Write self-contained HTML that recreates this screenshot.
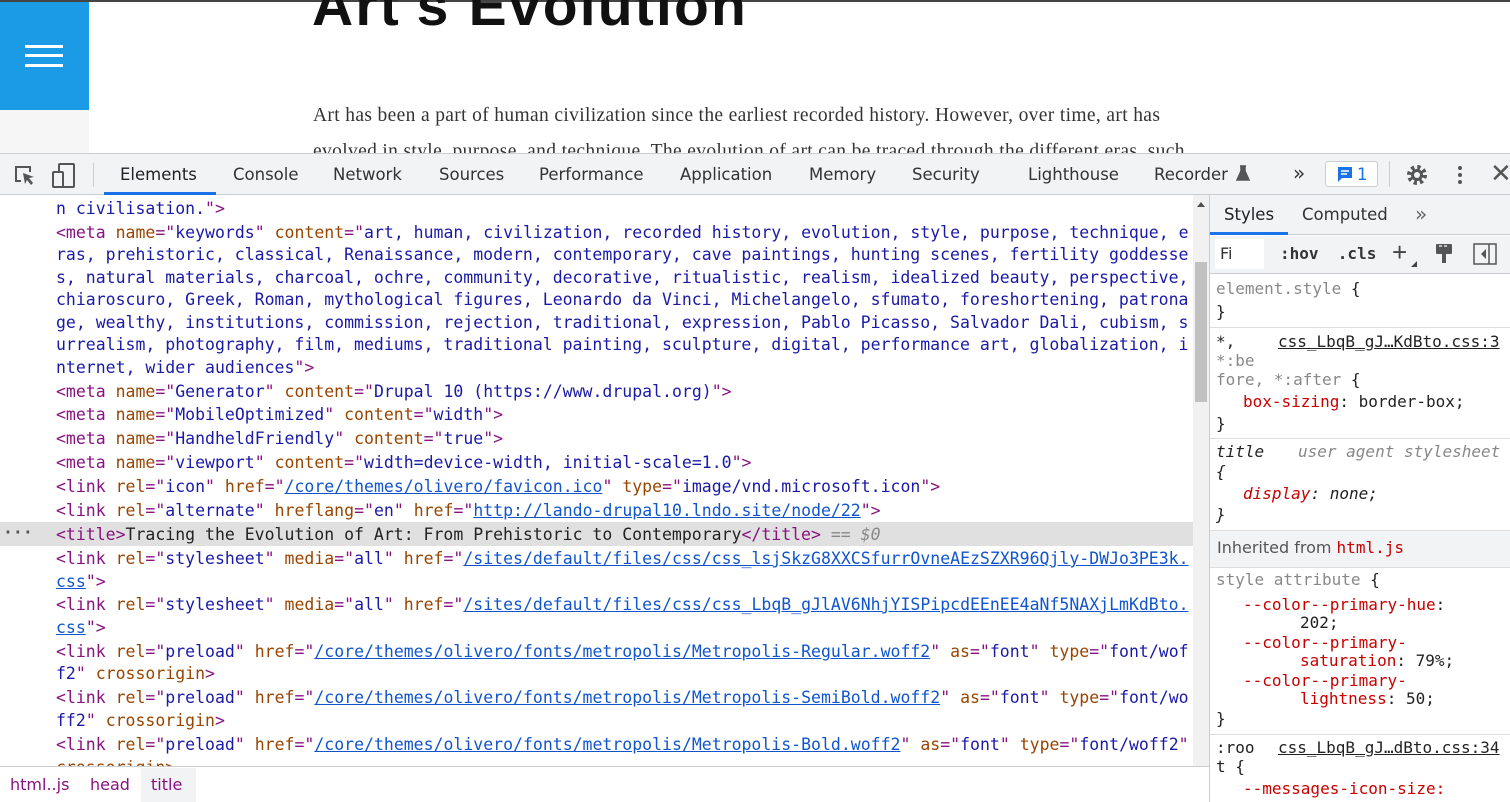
<!DOCTYPE html>
<html><head><meta charset="utf-8"><style>
*{margin:0;padding:0;box-sizing:border-box}
body{width:1510px;height:802px;overflow:hidden;background:#fff;position:relative;font-family:"Liberation Sans","DejaVu Sans",sans-serif}
.a{position:absolute;white-space:pre}
.m{font-family:"DejaVu Sans Mono","Liberation Mono",monospace;font-size:16.5px;line-height:20px}
.t{color:#881280}.n{color:#994500}.v{color:#1a1aa6}.l{color:#1155cc;text-decoration:underline}.k{color:#222}
.tab{position:absolute;top:165px;color:#333;font-family:"DejaVu Sans","Liberation Sans",sans-serif;font-size:16.5px}
.r{color:#c80000}.g{color:#888}
</style></head><body>
<div class="a" style="left:0;top:0;width:1510px;height:2px;background:#444"></div>
<div class="a" style="left:0;top:2px;width:89px;height:108px;background:#1b9be5"></div>
<div class="a" style="left:25px;top:45px;width:38px;height:3px;background:#fff"></div>
<div class="a" style="left:25px;top:54px;width:38px;height:3px;background:#fff"></div>
<div class="a" style="left:25px;top:64px;width:38px;height:3px;background:#fff"></div>
<div class="a" style="left:0;top:110px;width:89px;height:44px;background:#f5f6f5"></div>
<div class="a" style="left:312px;top:-24px;font-size:57px;font-weight:bold;color:#111;line-height:60px;letter-spacing:2.2px">Art's Evolution</div>
<div class="a" style="left:313px;top:105px;font-family:'Liberation Serif',serif;font-size:19.5px;letter-spacing:0.35px;color:#333">Art has been a part of human civilization since the earliest recorded history. However, over time, art has</div>
<div class="a" style="left:313px;top:141px;font-family:'Liberation Serif',serif;font-size:19.5px;letter-spacing:0.35px;color:#333">evolved in style, purpose, and technique. The evolution of art can be traced through the different eras, such</div>

<!-- toolbar -->
<div class="a" style="left:0;top:153px;width:1510px;height:42px;background:#f1f3f4;border-top:1px solid #cbcdd1;border-bottom:1px solid #cbcdd1"></div>
<svg class="a" style="left:13px;top:164px" width="24" height="24" viewBox="0 0 24 24"><path d="M8 17H3V3h14v5" fill="none" stroke="#555" stroke-width="2"/><path d="M10 9l11 4-5 1 4 5-2 2-4-5-2 4z" fill="#555"/></svg>
<svg class="a" style="left:52px;top:163px" width="24" height="26" viewBox="0 0 24 26"><rect x="7" y="1" width="15" height="23" rx="1" fill="none" stroke="#555" stroke-width="2"/><rect x="1" y="9" width="10" height="15" rx="1" fill="#f1f3f4" stroke="#555" stroke-width="2"/></svg>
<div class="a" style="left:93px;top:163px;width:1px;height:24px;background:#ccc"></div>
<div class="tab" style="left:120px;color:#202124">Elements</div>
<div class="a" style="left:104px;top:192px;width:112px;height:3px;background:#1a73e8"></div>
<div class="tab" style="left:233px">Console</div>
<div class="tab" style="left:333px">Network</div>
<div class="tab" style="left:439px">Sources</div>
<div class="tab" style="left:539px">Performance</div>
<div class="tab" style="left:680px">Application</div>
<div class="tab" style="left:809px">Memory</div>
<div class="tab" style="left:912px">Security</div>
<div class="tab" style="left:1028px">Lighthouse</div>
<div class="tab" style="left:1154px">Recorder</div>
<svg class="a" style="left:1236px;top:165px" width="14" height="16" viewBox="0 0 14 16"><path d="M4 1h6M5 1v5L1 15h12L9 6V1" fill="#555" stroke="#555" stroke-width="1.5"/></svg>
<div class="tab" style="left:1293px;font-size:20px;top:161px">»</div>
<div class="a" style="left:1325px;top:161px;width:53px;height:26px;border:1px solid #ccc;border-radius:3px;background:#fff"></div>
<svg class="a" style="left:1336px;top:165px" width="18" height="18" viewBox="0 0 18 18"><path d="M2 2h14v11H6l-4 4z" fill="#1a73e8"/><path d="M5 6h8M5 9h6" stroke="#fff" stroke-width="1.5"/></svg>
<div class="tab" style="left:1357px;color:#1a73e8">1</div>
<div class="a" style="left:1389px;top:161px;width:1px;height:26px;background:#ccc"></div>
<svg class="a" style="left:1405px;top:163px" width="24" height="24" viewBox="0 0 24 24"><circle cx="12" cy="12" r="7.5" fill="none" stroke="#555" stroke-width="5" stroke-dasharray="3 2.9"/><circle cx="12" cy="12" r="6" fill="#555"/><circle cx="12" cy="12" r="3" fill="#f1f3f4"/></svg>
<div class="a" style="left:1458px;top:166px;width:4px;height:4px;border-radius:2px;background:#555;box-shadow:0 7px #555,0 14px #555"></div>
<div class="a" style="left:1490px;top:158px;font-size:26px;color:#555">✕</div>

<!-- code -->
<div class="m">
<div class="a" style="left:56px;top:199px"><span class="v">n civilisation.</span><span class="t">"></span></div>
<div class="a" style="left:56px;top:223px"><span class="t">&lt;meta </span><span class="n">name</span><span class="t">="</span><span class="v">keywords</span><span class="t">" </span><span class="n">content</span><span class="t">="</span><span class="v">art, human, civilization, recorded history, evolution, style, purpose, technique, e</span></div>
<div class="a v" style="left:56px;top:245px">ras, prehistoric, classical, Renaissance, modern, contemporary, cave paintings, hunting scenes, fertility goddesse</div>
<div class="a v" style="left:56px;top:268px">s, natural materials, charcoal, ochre, community, decorative, ritualistic, realism, idealized beauty, perspective,</div>
<div class="a v" style="left:56px;top:290px">chiaroscuro, Greek, Roman, mythological figures, Leonardo da Vinci, Michelangelo, sfumato, foreshortening, patrona</div>
<div class="a v" style="left:56px;top:313px">ge, wealthy, institutions, commission, rejection, traditional, expression, Pablo Picasso, Salvador Dali, cubism, s</div>
<div class="a v" style="left:56px;top:335px">urrealism, photography, film, mediums, traditional painting, sculpture, digital, performance art, globalization, i</div>
<div class="a" style="left:56px;top:358px"><span class="v">nternet, wider audiences</span><span class="t">"></span></div>
<div class="a" style="left:56px;top:382px"><span class="t">&lt;meta </span><span class="n">name</span><span class="t">="</span><span class="v">Generator</span><span class="t">" </span><span class="n">content</span><span class="t">="</span><span class="v">Drupal 10 (https://www.drupal.org)</span><span class="t">"></span></div>
<div class="a" style="left:56px;top:405px"><span class="t">&lt;meta </span><span class="n">name</span><span class="t">="</span><span class="v">MobileOptimized</span><span class="t">" </span><span class="n">content</span><span class="t">="</span><span class="v">width</span><span class="t">"></span></div>
<div class="a" style="left:56px;top:429px"><span class="t">&lt;meta </span><span class="n">name</span><span class="t">="</span><span class="v">HandheldFriendly</span><span class="t">" </span><span class="n">content</span><span class="t">="</span><span class="v">true</span><span class="t">"></span></div>
<div class="a" style="left:56px;top:453px"><span class="t">&lt;meta </span><span class="n">name</span><span class="t">="</span><span class="v">viewport</span><span class="t">" </span><span class="n">content</span><span class="t">="</span><span class="v">width=device-width, initial-scale=1.0</span><span class="t">"></span></div>
<div class="a" style="left:56px;top:477px"><span class="t">&lt;link </span><span class="n">rel</span><span class="t">="</span><span class="v">icon</span><span class="t">" </span><span class="n">href</span><span class="t">="</span><span class="l">/core/themes/olivero/favicon.ico</span><span class="t">" </span><span class="n">type</span><span class="t">="</span><span class="v">image/vnd.microsoft.icon</span><span class="t">"></span></div>
<div class="a" style="left:56px;top:501px"><span class="t">&lt;link </span><span class="n">rel</span><span class="t">="</span><span class="v">alternate</span><span class="t">" </span><span class="n">hreflang</span><span class="t">="</span><span class="v">en</span><span class="t">" </span><span class="n">href</span><span class="t">="</span><span class="l">http://lando-drupal10.lndo.site/node/22</span><span class="t">"></span></div>
<div class="a" style="left:0;top:522px;width:1193px;height:24px;background:#e0e0e0;white-space:normal"></div>
<div class="a" style="left:3px;top:523px;color:#555;font-weight:bold">···</div>
<div class="a" style="left:56px;top:525px"><span class="t">&lt;title></span><span class="k">Tracing the Evolution of Art: From Prehistoric to Contemporary</span><span class="t">&lt;/title></span><span class="g" style="font-style:italic"> == $0</span></div>
<div class="a" style="left:56px;top:549px"><span class="t">&lt;link </span><span class="n">rel</span><span class="t">="</span><span class="v">stylesheet</span><span class="t">" </span><span class="n">media</span><span class="t">="</span><span class="v">all</span><span class="t">" </span><span class="n">href</span><span class="t">="</span><span class="l">/sites/default/files/css/css_lsjSkzG8XXCSfurrOvneAEzSZXR96Qjly-DWJo3PE3k.</span></div>
<div class="a" style="left:56px;top:572px"><span class="l">css</span><span class="t">"></span></div>
<div class="a" style="left:56px;top:595px"><span class="t">&lt;link </span><span class="n">rel</span><span class="t">="</span><span class="v">stylesheet</span><span class="t">" </span><span class="n">media</span><span class="t">="</span><span class="v">all</span><span class="t">" </span><span class="n">href</span><span class="t">="</span><span class="l">/sites/default/files/css/css_LbqB_gJlAV6NhjYISPipcdEEnEE4aNf5NAXjLmKdBto.</span></div>
<div class="a" style="left:56px;top:618px"><span class="l">css</span><span class="t">"></span></div>
<div class="a" style="left:56px;top:642px"><span class="t">&lt;link </span><span class="n">rel</span><span class="t">="</span><span class="v">preload</span><span class="t">" </span><span class="n">href</span><span class="t">="</span><span class="l">/core/themes/olivero/fonts/metropolis/Metropolis-Regular.woff2</span><span class="t">" </span><span class="n">as</span><span class="t">="</span><span class="v">font</span><span class="t">" </span><span class="n">type</span><span class="t">="</span><span class="v">font/wof</span></div>
<div class="a" style="left:56px;top:664px"><span class="v">f2</span><span class="t">" </span><span class="n">crossorigin</span><span class="t">></span></div>
<div class="a" style="left:56px;top:688px"><span class="t">&lt;link </span><span class="n">rel</span><span class="t">="</span><span class="v">preload</span><span class="t">" </span><span class="n">href</span><span class="t">="</span><span class="l">/core/themes/olivero/fonts/metropolis/Metropolis-SemiBold.woff2</span><span class="t">" </span><span class="n">as</span><span class="t">="</span><span class="v">font</span><span class="t">" </span><span class="n">type</span><span class="t">="</span><span class="v">font/wo</span></div>
<div class="a" style="left:56px;top:711px"><span class="v">ff2</span><span class="t">" </span><span class="n">crossorigin</span><span class="t">></span></div>
<div class="a" style="left:56px;top:735px"><span class="t">&lt;link </span><span class="n">rel</span><span class="t">="</span><span class="v">preload</span><span class="t">" </span><span class="n">href</span><span class="t">="</span><span class="l">/core/themes/olivero/fonts/metropolis/Metropolis-Bold.woff2</span><span class="t">" </span><span class="n">as</span><span class="t">="</span><span class="v">font</span><span class="t">" </span><span class="n">type</span><span class="t">="</span><span class="v">font/woff2</span><span class="t">"</span></div>
<div class="a n" style="left:56px;top:758px">crossorigin></div>
</div>
<!-- scrollbar -->
<div class="a" style="left:1193px;top:195px;width:16px;height:572px;background:#f1f1f1"></div>
<div class="a" style="left:1197px;top:202px;width:0;height:0;border-left:4px solid transparent;border-right:4px solid transparent;border-bottom:5px solid #505050"></div>
<div class="a" style="left:1195px;top:262px;width:12px;height:140px;background:#c1c1c1"></div>
<!-- breadcrumb -->
<div class="a" style="left:0;top:766px;width:1209px;height:36px;background:#fff;border-top:1px solid #cbcdd1"></div>
<div class="a" style="left:141px;top:768px;width:55px;height:34px;background:#f1f3f4"></div>
<div class="a" style="left:10px;top:775px;color:#881280;font-family:'DejaVu Sans',sans-serif;font-size:16px">html..js</div>
<div class="a" style="left:90px;top:775px;color:#881280;font-family:'DejaVu Sans',sans-serif;font-size:16px">head</div>
<div class="a" style="left:151px;top:775px;color:#881280;font-family:'DejaVu Sans',sans-serif;font-size:16px">title</div>

<!-- right panel -->
<div class="a" style="left:1209px;top:195px;width:1px;height:607px;background:#cbcdd1"></div>
<div class="a" style="left:1210px;top:195px;width:300px;height:40px;background:#f1f3f4;border-bottom:1px solid #cbcdd1"></div>
<div class="tab" style="left:1224px;top:205px;color:#202124">Styles</div>
<div class="a" style="left:1210px;top:232px;width:78px;height:3px;background:#1a73e8"></div>
<div class="tab" style="left:1302px;top:205px">Computed</div>
<div class="tab" style="left:1415px;top:202px;font-size:20px;color:#666">»</div>
<div class="a" style="left:1210px;top:236px;width:300px;height:38px;background:#f1f3f4;border-bottom:1px solid #cbcdd1"></div>
<div class="a" style="left:1215px;top:239px;width:49px;height:30px;background:#fff"></div>
<div class="a" style="left:1220px;top:244px;font-family:'DejaVu Sans',sans-serif;font-size:16px;color:#333">Fi</div>
<div class="a" style="left:1280px;top:244px;font-family:'DejaVu Sans Mono',monospace;font-size:16px;font-weight:bold;color:#333">:hov  .cls</div>
<div class="a" style="left:1392px;top:237px;font-size:26px;color:#444">+</div>
<div class="a" style="left:1411px;top:261px;width:0;height:0;border-left:6px solid transparent;border-bottom:6px solid #444"></div>
<svg class="a" style="left:1434px;top:242px" width="20" height="24" viewBox="0 0 20 24"><rect x="2" y="2" width="16" height="10" rx="1" fill="#555"/><path d="M5 4h3M10 4h3" stroke="#fff" stroke-width="1.2"/><rect x="8" y="12" width="4" height="9" fill="#555"/></svg>
<svg class="a" style="left:1473px;top:243px" width="24" height="22" viewBox="0 0 24 22"><rect x="1" y="1" width="22" height="20" fill="none" stroke="#555" stroke-width="1.5"/><path d="M16 1v20" stroke="#555" stroke-width="1.5"/><path d="M13 6l-5 5 5 5z" fill="#555"/></svg>
<div class="m" style="font-size:16px">
<div class="a" style="left:1216px;top:279px"><span class="g">element.style </span><span class="k">{</span></div>
<div class="a k" style="left:1216px;top:302px">}</div>
<div class="a" style="left:1210px;top:327px;width:300px;height:1px;background:#ddd"></div>
<div class="a k" style="left:1216px;top:332px">*,</div>
<div class="a k" style="left:1278px;top:332px;text-decoration:underline">css_LbqB_gJ…KdBto.css:3</div>
<div class="a g" style="left:1216px;top:351px">*:be</div>
<div class="a" style="left:1216px;top:370px"><span class="g">fore, *:after </span><span class="k">{</span></div>
<div class="a" style="left:1243px;top:392px"><span class="r">box-sizing</span><span class="k">: border-box;</span></div>
<div class="a k" style="left:1216px;top:414px">}</div>
<div class="a" style="left:1210px;top:438px;width:300px;height:1px;background:#ddd"></div>
<div class="a k" style="left:1216px;top:442px;font-style:italic">title</div>
<div class="a g" style="left:1298px;top:442px;font-style:italic">user agent stylesheet</div>
<div class="a k" style="left:1216px;top:462px;font-style:italic">{</div>
<div class="a" style="left:1243px;top:484px;font-style:italic"><span class="r">display</span><span class="k">: none;</span></div>
<div class="a k" style="left:1216px;top:505px;font-style:italic">}</div>
</div>
<div class="a" style="left:1210px;top:530px;width:300px;height:38px;background:#f1f3f4;border-top:1px solid #ddd;border-bottom:1px solid #ddd"></div>
<div class="a" style="left:1217px;top:538px;font-family:'DejaVu Sans',sans-serif;font-size:16px;color:#555">Inherited from <span style="font-family:'DejaVu Sans Mono',monospace;color:#c80000">html.js</span></div>
<div class="m" style="font-size:16px">
<div class="a" style="left:1216px;top:570px"><span class="g">style attribute </span><span class="k">{</span></div>
<div class="a" style="left:1243px;top:595px"><span class="r">--color--primary-hue</span><span class="k">:</span></div>
<div class="a k" style="left:1300px;top:613px">202;</div>
<div class="a r" style="left:1243px;top:633px">--color--primary-</div>
<div class="a" style="left:1300px;top:651px"><span class="r">saturation</span><span class="k">: 79%;</span></div>
<div class="a r" style="left:1243px;top:671px">--color--primary-</div>
<div class="a" style="left:1300px;top:689px"><span class="r">lightness</span><span class="k">: 50;</span></div>
<div class="a k" style="left:1216px;top:709px">}</div>
<div class="a" style="left:1210px;top:734px;width:300px;height:1px;background:#ddd"></div>
<div class="a k" style="left:1216px;top:738px">:roo</div>
<div class="a k" style="left:1278px;top:738px;text-decoration:underline">css_LbqB_gJ…dBto.css:34</div>
<div class="a k" style="left:1216px;top:757px">t {</div>
<div class="a r" style="left:1243px;top:779px">--messages-icon-size:</div>
</div>
</body></html>
